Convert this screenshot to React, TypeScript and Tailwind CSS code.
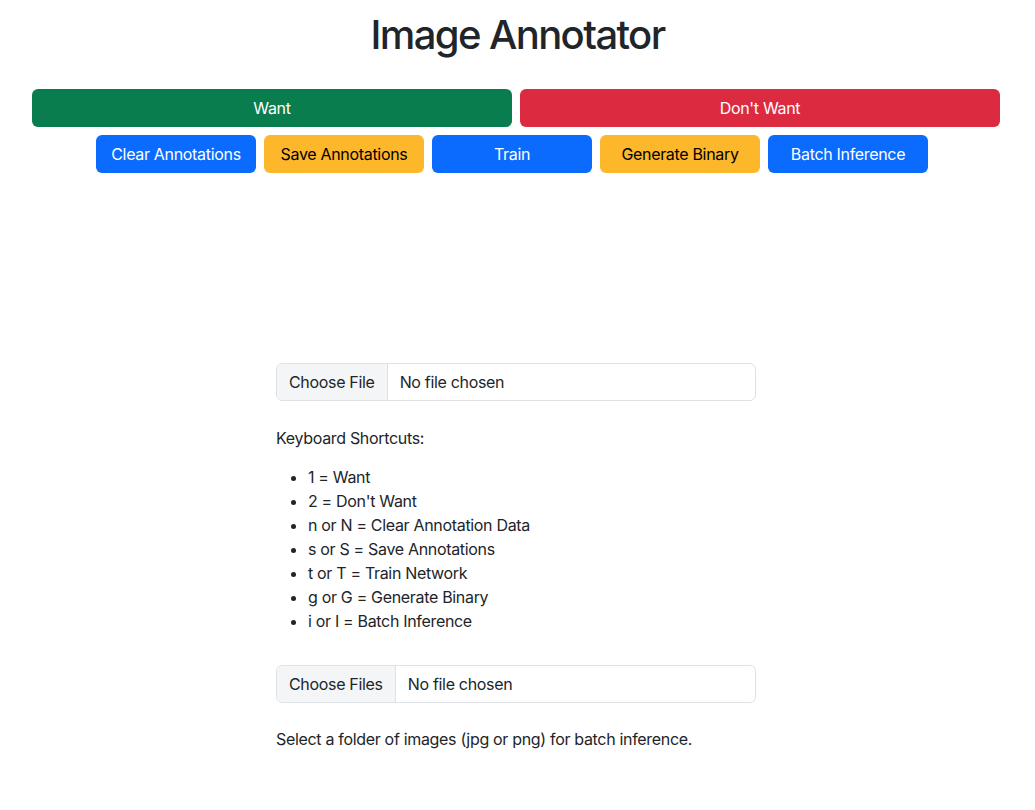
import React from "react";

const shortcuts = [
  "1 = Want",
  "2 = Don't Want",
  "n or N = Clear Annotation Data",
  "s or S = Save Annotations",
  "t or T = Train Network",
  "g or G = Generate Binary",
  "i or I = Batch Inference",
];

function FilePicker({ label }: { label: string }) {
  return (
    <div className="flex h-[38px] w-[480px] overflow-hidden rounded-[6px] border border-[#dee2e6] bg-white">
      <div className="flex items-center border-r border-[#dee2e6] bg-[#f4f5f7] px-3 text-[#212529]">
        {label}
      </div>
      <div className="flex items-center px-3 text-[#212529]">No file chosen</div>
    </div>
  );
}

export default function App() {
  return (
    <div className="min-h-[810px] w-[1035px] bg-white font-['Inter',sans-serif] text-[16px] leading-6 tracking-[-0.02em] text-[#212529]">
      <h1 className="pt-[11px] text-center text-[40px] font-medium leading-[48px] tracking-[-0.04em]">Image Annotator</h1>

      <div className="ml-[32px] mt-[30px] flex w-[968px] gap-2">
        <button className="h-[38px] flex-1 rounded-[6px] bg-[#0a7d4e] text-white">Want</button>
        <button className="h-[38px] flex-1 rounded-[6px] bg-[#dc2b40] text-white">Don't Want</button>
      </div>

      <div className="ml-[96px] mt-2 flex gap-2">
        <button className="h-[38px] w-[160px] rounded-[6px] bg-[#0a6bfe] text-white">Clear Annotations</button>
        <button className="h-[38px] w-[160px] rounded-[6px] bg-[#fdb72b] text-black">Save Annotations</button>
        <button className="h-[38px] w-[160px] rounded-[6px] bg-[#0a6bfe] text-white">Train</button>
        <button className="h-[38px] w-[160px] rounded-[6px] bg-[#fdb72b] text-black">Generate Binary</button>
        <button className="h-[38px] w-[160px] rounded-[6px] bg-[#0a6bfe] text-white">Batch Inference</button>
      </div>

      {/* empty canvas area */}
      <div className="h-[190px]" />

      <div className="ml-[276px] w-[480px]">
        <FilePicker label="Choose File" />
        <p className="mt-[25px]">Keyboard Shortcuts:</p>
        <ul className="mt-[15px] list-disc pl-8">
          {shortcuts.map((s) => (
            <li key={s}>{s}</li>
          ))}
        </ul>
        <div className="mt-8">
          <FilePicker label="Choose Files" />
        </div>
        <p className="mt-6">Select a folder of images (jpg or png) for batch inference.</p>
      </div>
    </div>
  );
}
